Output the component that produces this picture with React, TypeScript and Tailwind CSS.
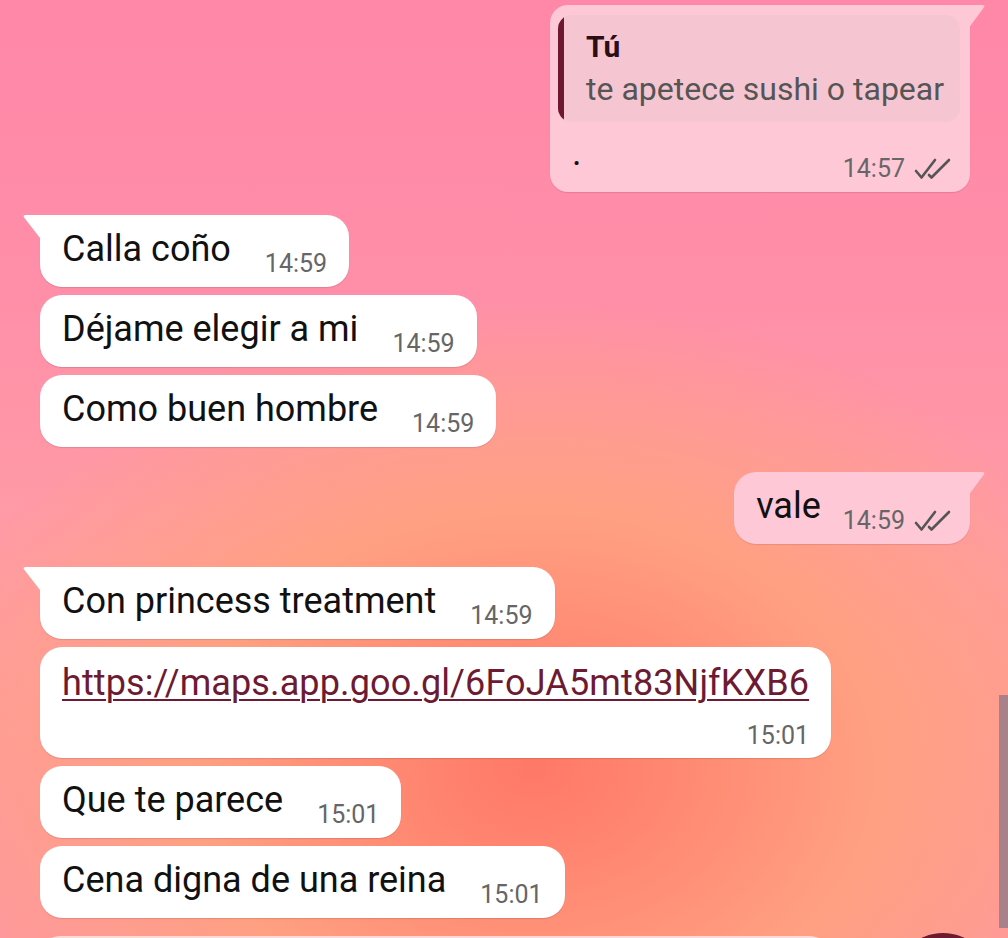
import React from "react";

function Checks() {
    return (
        <svg width="37" height="22" viewBox="0 0 37 22" className="ml-[9px] shrink-0" fill="none">
            <path d="M2 13 L7.5 19.5 L21 2" stroke="#555" strokeWidth="2.6" strokeLinecap="round" strokeLinejoin="round" />
            <path d="M15 17 L17.5 19.5 L35 2" stroke="#555" strokeWidth="2.6" strokeLinecap="round" strokeLinejoin="round" />
        </svg>
    )
}

function TailLeft() {
    return (
        <svg className="absolute -left-[18px] top-0" width="26" height="26" viewBox="0 0 26 26">
            <path d="M26 0 L4 0 Q0 0 2.5 3 L18 23 L26 26 Z" fill="#ffffff" />
        </svg>
    )
}

function TailRight({ color }: { color: string }) {
    return (
        <svg className="absolute -right-[16px] top-0" width="24" height="28" viewBox="0 0 24 28">
            <path d="M0 0 L20 0 Q24 0 21.5 3 L6 24 L0 28 Z" fill={color} />
        </svg>
    )
}

function Received({ text, time, tail }: { text: string; time: string; tail?: boolean }) {
    return (
        <div className={"relative self-start bg-white rounded-[22px] shadow-[0_1px_1px_rgba(0,0,0,0.12)] pt-[13px] pb-[8px] px-[22px] flex items-start " + (tail ? "rounded-tl-none" : "")}>
            {tail && <TailLeft />}
            <span className="text-[36px] leading-[42px] text-[#111] whitespace-nowrap">{text}</span>
            <span className="ml-[34px] mt-[21px] text-[25px] leading-[30px] text-[#666] whitespace-nowrap">{time}</span>
        </div>
    )
}

export default function App() {
    return (
        <div className="relative w-[1008px] h-[938px] overflow-hidden font-['Roboto',sans-serif] bg-[radial-gradient(ellipse_62%_50%_at_53%_82%,#ff7868_0%,#ff8c74_28%,#ffa082_55%,rgba(255,154,160,0)_100%),linear-gradient(180deg,#ff87a8_0%,#ff8ea8_30%,#ff9aa6_55%,#ff9c9a_75%,#ff98a0_100%)]">
            <div className="flex flex-col pt-[5px] pl-[40px] pr-[38px]">
                {/* quote reply */}
                <div className="relative self-end w-[420px] bg-[#ffc8d6] rounded-[18px] rounded-tr-none shadow-[0_1px_1px_rgba(0,0,0,0.1)] pt-[10px] pl-[8px] pr-[10px] pb-[8px]">
                    <TailRight color="#ffc8d6" />
                    <div className="flex bg-[#f5c6d1] rounded-[14px] overflow-hidden h-[107px]">
                        <div className="w-[6px] bg-[#6d1730] shrink-0" />
                        <div className="pl-[22px] pt-[14px]">
                            <div className="text-[30px] leading-[36px] font-bold text-[#2a0f16]">Tú</div>
                            <div className="mt-[4px] text-[32px] leading-[40px] text-[#555] whitespace-nowrap">te apetece sushi o tapear</div>
                        </div>
                    </div>
                    <div className="flex items-start justify-between pl-[14px]">
                        <span className="text-[36px] leading-[42px] text-[#111] mt-[10px]">.</span>
                        <div className="flex items-center mt-[32px] mr-[9px]">
                            <span className="text-[25px] leading-[30px] text-[#666]">14:57</span>
                            <Checks />
                        </div>
                    </div>
                </div>

                <div className="mt-[23px] flex flex-col gap-[8px]">
                    <Received text="Calla coño" time="14:59" tail />
                    <Received text="Déjame elegir a mi" time="14:59" />
                    <Received text="Como buen hombre" time="14:59" />
                </div>

                <div className="relative self-end mt-[25px] bg-[#ffc8d6] rounded-[22px] rounded-tr-none shadow-[0_1px_1px_rgba(0,0,0,0.1)] pt-[13px] pb-[8px] pl-[22px] pr-[19px] flex items-start">
                    <TailRight color="#ffc8d6" />
                    <span className="text-[36px] leading-[42px] text-[#111]">vale</span>
                    <div className="flex items-center ml-[22px] mt-[21px]">
                        <span className="text-[25px] leading-[30px] text-[#666]">14:59</span>
                        <Checks />
                    </div>
                </div>

                <div className="mt-[23px] flex flex-col gap-[8px]">
                    <Received text="Con princess treatment" time="14:59" tail />
                    <div className="self-start bg-white rounded-[22px] shadow-[0_1px_1px_rgba(0,0,0,0.12)] pt-[15px] pb-[7px] px-[22px] flex flex-col">
                        <span className="text-[36px] leading-[42px] tracking-[0.12px] text-[#6d1a33] underline underline-offset-[4px] decoration-[2px] whitespace-nowrap">https://maps.app.goo.gl/6FoJA5mt83NjfKXB6</span>
                        <span className="self-end mt-[17px] text-[25px] leading-[30px] text-[#666]">15:01</span>
                    </div>
                    <Received text="Que te parece" time="15:01" />
                    <Received text="Cena digna de una reina" time="15:01" />
                </div>

                <div className="mt-[18px] w-[790px] h-[40px] bg-[#ffd9d6] rounded-[20px]" />
            </div>

            <div className="absolute right-0 top-[695px] w-[9px] h-[233px] bg-[#a8828a]" />
            <div className="absolute left-[894px] top-[933px] w-[98px] h-[98px] rounded-full bg-[#6d1a33]" />
        </div>
    )
}
